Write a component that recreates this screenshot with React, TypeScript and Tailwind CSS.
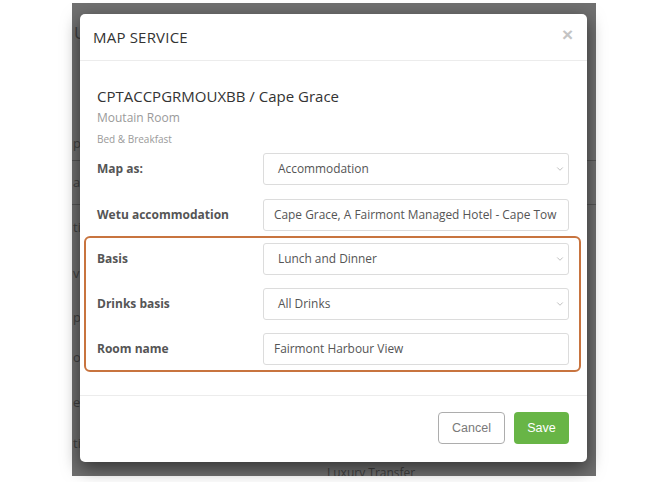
import React from 'react';
import { ChevronDown } from 'lucide-react';

type Field = { label: string; value: string; select?: boolean };

const topFields: Field[] = [
  { label: 'Map as:', value: 'Accommodation', select: true },
  { label: 'Wetu accommodation', value: 'Cape Grace, A Fairmont Managed Hotel - Cape Tow' },
];

const mealFields: Field[] = [
  { label: 'Basis', value: 'Lunch and Dinner', select: true },
  { label: 'Drinks basis', value: 'All Drinks', select: true },
  { label: 'Room name', value: 'Fairmont Harbour View' },
];

const FieldRow: React.FC<{ field: Field }> = ({ field }) => (
  <div className="flex items-center h-[32px]">
    <label className="w-[166px] shrink-0 text-[12px] font-bold text-[#555]">{field.label}</label>
    <div className="flex-1 min-w-0 h-full flex items-center border border-[#dcdcdc] rounded-[3px] bg-white">
      <div className={`flex-1 min-w-0 ${field.select ? 'pl-[14px]' : 'pl-[10px] pr-[8px]'}`}>
        <div className="whitespace-nowrap text-[11.9px] text-[#555]">{field.value}</div>
      </div>
      {field.select && <ChevronDown size={10} strokeWidth={1.5} className="mr-[3px] shrink-0 text-[#999]" />}
    </div>
  </div>
);

// page rows peeking out behind the backdrop
const backdropRows = [
  { text: 'p', h: 'h-[34px]' },
  { text: 'a', h: 'h-[44px]' },
  { text: 'ti', h: 'h-[46px]' },
  { text: 'v', h: 'h-[45px]' },
  { text: 'pe', h: 'h-[44px]' },
  { text: 'ol', h: 'h-[36px]' },
  { text: 'er', h: 'h-[53px]' },
  { text: 'ti', h: 'h-[30px]' },
];

export default function App() {
  return (
    <div className="relative w-[670px] h-[482px] bg-white overflow-hidden" style={{ fontFamily: '"Open Sans", sans-serif' }}>
      {/* dimmed page behind the dialog */}
      <div className="absolute left-[72px] top-[3px] w-[524px] h-[473px] bg-[#707070] overflow-hidden text-[#3f3f3f]">
        <div className="pl-[2px] pt-[18px] text-[17px] leading-[24px]">U</div>
        <div className="pt-[82px] flex flex-col text-[13px]">
          {backdropRows.map((r, i) => (
            <div key={i} className={`${r.h} flex items-center pl-[1px] ${i < 2 ? 'border-b border-[#555]' : ''}`}>
              {r.text}
            </div>
          ))}
        </div>
        <div className="absolute left-[255px] top-[462px] text-[12px] leading-[16px] text-[#3f3f3f]">Luxury Transfer</div>
      </div>

      {/* dialog */}
      <div className="absolute left-[80px] top-[14px] w-[507px] h-[448px] bg-white rounded-[5px] shadow-[0_6px_18px_rgba(0,0,0,0.55)] flex flex-col">
        <div className="h-[47px] shrink-0 flex items-center justify-between px-[13px] border-b border-[#ececec]">
          <h2 className="text-[15px] text-[#333] tracking-[0.2px]">MAP SERVICE</h2>
          <span className="text-[19px] leading-none font-bold text-[#c4c4c4] mr-[1px] -mt-[6px]" style={{ fontFamily: '"Liberation Sans", sans-serif' }}>×</span>
        </div>

        <div className="flex-1 pt-[23px] pr-[18px] pl-[17px]">
          <h3 className="text-[15px] leading-[24px] text-[#333]">CPTACCPGRMOUXBB / Cape Grace</h3>
          <p className="text-[12px] leading-[20px] text-[#9a9a9a]">Moutain Room</p>
          <p className="mt-[2px] text-[10px] leading-[18px] text-[#9a9a9a]">Bed &amp; Breakfast</p>

          <div className="mt-[5px] flex flex-col gap-[14px]">
            {topFields.map(f => <FieldRow key={f.label} field={f} />)}
          </div>

          <div className="mt-[5px] -ml-[13px] -mr-[12px] pl-[11px] pr-[10px] py-[5px] border-2 border-[#c8743f] rounded-[6px] flex flex-col gap-[13px]">
            {mealFields.map(f => <FieldRow key={f.label} field={f} />)}
          </div>
        </div>

        <div className="h-[67px] shrink-0 border-t border-[#ececec] flex justify-end items-start gap-[9px] pt-[16px] pr-[18px]" style={{ fontFamily: '"Liberation Sans", sans-serif' }}>
          <button className="w-[67px] h-[32px] border border-[#adadad] rounded-[4px] text-[12.5px] text-[#7a7a7a] bg-white">Cancel</button>
          <button className="w-[55px] h-[32px] rounded-[4px] text-[12.5px] text-white bg-[#68b546]">Save</button>
        </div>
      </div>
    </div>
  );
}
